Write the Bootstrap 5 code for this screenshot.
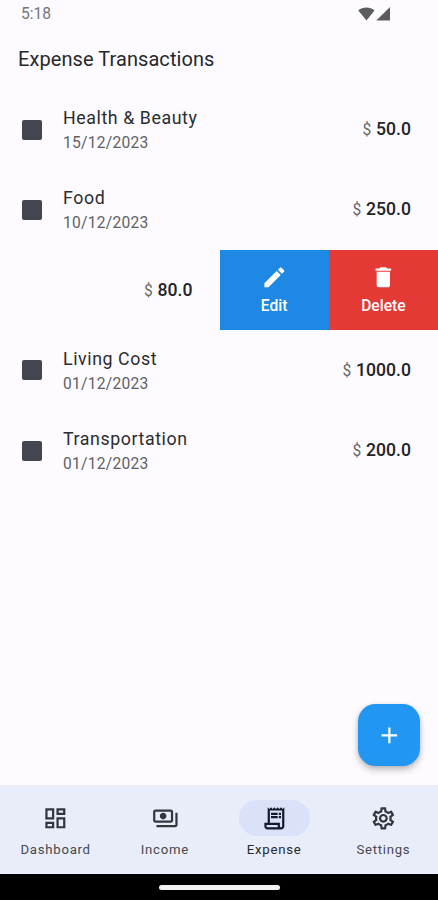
<!DOCTYPE html>
<html lang="en">
<head>
<meta charset="utf-8">
<meta name="viewport" content="width=device-width, initial-scale=1">
<title>Expense Transactions</title>
<link href="https://cdn.jsdelivr.net/npm/bootstrap@5.3.0/dist/css/bootstrap.min.css" rel="stylesheet">
<style>
  body { font-family: Roboto, sans-serif; background: #fdfbff; color: #2b2c30; height: 900px; overflow: hidden; line-height: 1.2; }
  .status { height: 29px; padding: 0 47px 0 21px; color: #737376; font-size: 15.6px; }
  .title-bar { height: 61px; padding: 0 18px 2px; }
  .title-bar h1 { font-size: 20px; font-weight: 400; letter-spacing: .07px; color: #27282b; }
  .entries { margin-top: -.4px !important; }
  .entry { height: 80.25px; }
  .entry-body { padding: 0 27px 0 22px; }
  .swatch { width: 20px; height: 20px; border-radius: 2px; background: #42474f; }
  .entry-text { padding-left: 21px; }
  .entry-name { font-size: 17.8px; letter-spacing: .58px; line-height: 25px; }
  .entry-date { font-size: 15.6px; letter-spacing: .26px; line-height: 22px; color: #606165; margin-top: 2px; }
  .amount { font-size: 17.6px; font-weight: 500; color: #222326; white-space: pre; }
  .amount small { font-size: 15.6px; font-weight: 400; color: #66676b; letter-spacing: .5px; }
  .slid { width: 219.5px; }
  .swipe { font-size: 15.6px; font-weight: 500; gap: 6px; padding-bottom: 1px; }
  .swipe-edit { background: #1e88e5; }
  .swipe-delete { background: #e53935; }
  .icon { width: 26.7px; height: 26.7px; fill: currentColor; display: block; }
  .fab-row { padding: 0 18px 19px 0; }
  .fab { width: 62px; height: 62px; border-radius: 17.5px; background: #2196f3; box-shadow: 0 4px 7px rgba(0,0,0,.22), 0 1px 4px rgba(0,0,0,.12); }
  .tabs { height: 89px; background: #e9edf9; padding: 15px 0 0 1px; }
  .tab-label { font-size: 13.2px; letter-spacing: .72px; line-height: 16px; margin-top: 6px; color: #46494f; }
  .pill { width: 71px; height: 36px; border-radius: 18px; color: #33373d; }
  .current .pill { background: #dae2f9; color: #141b2c; }
  .current .tab-label { color: #26282d; }
  .system { height: 26px; }
  .handle { width: 121px; height: 5px; border-radius: 2.5px; background: #f2f2f2; }
</style>
</head>
<body class="d-flex flex-column">
  <div class="status d-flex align-items-center justify-content-between flex-shrink-0">
    <span>5:18</span>
    <svg width="33" height="15" viewBox="0 0 33 15" fill="#5c5c5e"><path d="M.3 3.4C4.9-.3 12 -.3 16.500 3.400L8.500 13.500Z"/><path d="M32 0V13.500H18.300Z"/></svg>
  </div>
  <header class="title-bar d-flex align-items-center flex-shrink-0">
    <h1 class="m-0">Expense Transactions</h1>
  </header>

  <main class="flex-grow-1 d-flex flex-column">
    <ul class="entries list-unstyled m-0">
      <li class="entry entry-body d-flex align-items-center">
        <span class="swatch"></span>
        <div class="entry-text flex-grow-1"><div class="entry-name">Health &amp; Beauty</div><div class="entry-date">15/12/2023</div></div>
        <div class="amount"><small>$</small> 50.0</div>
      </li>
      <li class="entry entry-body d-flex align-items-center">
        <span class="swatch"></span>
        <div class="entry-text flex-grow-1"><div class="entry-name">Food</div><div class="entry-date">10/12/2023</div></div>
        <div class="amount"><small>$</small> 250.0</div>
      </li>
      <li class="entry d-flex">
        <div class="slid entry-body d-flex align-items-center justify-content-end"><div class="amount"><small>$</small> 80.0</div></div>
        <div class="swipe swipe-edit col text-white d-flex flex-column align-items-center justify-content-center" role="button">
          <svg class="icon" viewBox="0 0 24 24"><path d="M3 17.250V21h3.750L17.810 9.940l-3.750-3.750zM20.710 7.040c.39-.39.39-1.020 0-1.410l-2.340-2.340a1 1 0 0 0-1.410 0l-1.830 1.830 3.750 3.750z"/></svg>Edit
        </div>
        <div class="swipe swipe-delete col text-white d-flex flex-column align-items-center justify-content-center" role="button">
          <svg class="icon" viewBox="0 0 24 24"><path d="M6 19c0 1.100.9 2 2 2h8c1.100 0 2-.9 2-2V7H6zM19 4h-3.500l-1-1h-5l-1 1H5v2h14z"/></svg>Delete
        </div>
      </li>
      <li class="entry entry-body d-flex align-items-center">
        <span class="swatch"></span>
        <div class="entry-text flex-grow-1"><div class="entry-name">Living Cost</div><div class="entry-date">01/12/2023</div></div>
        <div class="amount"><small>$</small> 1000.0</div>
      </li>
      <li class="entry entry-body d-flex align-items-center">
        <span class="swatch"></span>
        <div class="entry-text flex-grow-1"><div class="entry-name">Transportation</div><div class="entry-date">01/12/2023</div></div>
        <div class="amount"><small>$</small> 200.0</div>
      </li>
    </ul>
    <div class="fab-row mt-auto d-flex justify-content-end">
      <button class="fab btn border-0 p-0 d-flex align-items-center justify-content-center text-white" aria-label="Add">
        <svg class="icon" viewBox="0 0 24 24"><path d="M19 13h-6v6h-2v-6H5v-2h6V5h2v6h6z"/></svg>
      </button>
    </div>
  </main>

  <nav class="tabs d-flex flex-shrink-0">
    <div class="col-3 d-flex flex-column align-items-center">
      <span class="pill d-flex align-items-center justify-content-center"><svg class="icon" viewBox="0 0 24 24"><path d="M19 5v2h-4V5h4M9 5v6H5V5h4m10 8v6h-4v-6h4M9 17v2H5v-2h4M21 3h-8v6h8V3zM11 3H3v10h8V3zm10 8h-8v10h8V11zm-10 4H3v6h8v-6z"/></svg></span>
      <span class="tab-label">Dashboard</span>
    </div>
    <div class="col-3 d-flex flex-column align-items-center">
      <span class="pill d-flex align-items-center justify-content-center"><svg class="icon" viewBox="0 0 24 24"><path d="M19 14V6c0-1.100-.9-2-2-2H3c-1.100 0-2 .9-2 2v8c0 1.100.9 2 2 2h14c1.100 0 2-.9 2-2zm-2 0H3V6h14v8zm-7-7c-1.660 0-3 1.340-3 3s1.340 3 3 3 3-1.340 3-3-1.340-3-3-3zm13 0v11c0 1.100-.9 2-2 2H4v-2h17V7h2z"/></svg></span>
      <span class="tab-label">Income</span>
    </div>
    <div class="col-3 current d-flex flex-column align-items-center">
      <span class="pill d-flex align-items-center justify-content-center"><svg class="icon" viewBox="0 0 24 24"><path d="M19.500 3.500 18 2l-1.500 1.500L15 2l-1.500 1.500L12 2l-1.500 1.500L9 2 7.500 3.500 6 2v14H3v3c0 1.660 1.340 3 3 3h12c1.660 0 3-1.340 3-3V2zM15 20H6c-.55 0-1-.45-1-1v-1h10zm4-1c0 .55-.45 1-1 1s-1-.45-1-1v-3H8V5h11zM9 7h6v2H9zM16 7h2v2h-2zM9 10h6v2H9zM16 10h2v2h-2z"/></svg></span>
      <span class="tab-label">Expense</span>
    </div>
    <div class="col-3 d-flex flex-column align-items-center">
      <span class="pill d-flex align-items-center justify-content-center"><svg class="icon" viewBox="0 0 24 24"><path d="M19.430 12.980c.04-.32.07-.64.07-.98 0-.34-.03-.66-.07-.98l2.110-1.650c.19-.15.24-.42.12-.64l-2-3.460c-.09-.16-.26-.25-.44-.25-.06 0-.12.01-.17.03l-2.490 1c-.52-.4-1.080-.73-1.690-.98l-.38-2.650C14.460 2.180 14.250 2 14 2h-4c-.25 0-.46.18-.49.42l-.38 2.650c-.61.25-1.170.59-1.690.98l-2.490-1c-.06-.02-.12-.03-.18-.03-.17 0-.34.09-.43.25l-2 3.460c-.13.22-.07.49.12.64l2.110 1.650c-.04.32-.07.65-.07.98 0 .33.03.66.07.98l-2.110 1.650c-.19.15-.24.42-.12.64l2 3.460c.09.16.26.25.44.25.06 0 .12-.01.17-.03l2.490-1c.52.4 1.080.73 1.690.98l.38 2.650c.03.24.24.42.49.42h4c.25 0 .46-.18.49-.42l.38-2.650c.61-.25 1.170-.59 1.690-.98l2.490 1c.06.02.12.03.18.03.17 0 .34-.09.43-.25l2-3.460c.12-.22.07-.49-.12-.64l-2.110-1.650zm-1.980-1.710c.04.31.05.52.05.73 0 .21-.02.43-.05.73l-.14 1.130.89.7 1.080.84-.7 1.210-1.270-.51-1.040-.42-.9.68c-.43.32-.84.56-1.250.73l-1.060.43-.16 1.130-.2 1.350h-1.400l-.19-1.350-.16-1.130-1.060-.43c-.43-.18-.83-.41-1.230-.71l-.91-.7-1.060.43-1.270.51-.7-1.210 1.080-.84.89-.7-.14-1.130c-.03-.31-.05-.54-.05-.74s.02-.43.05-.73l.14-1.130-.89-.7-1.080-.84.7-1.210 1.270.51 1.040.42.9-.68c.43-.32.84-.56 1.250-.73l1.060-.43.16-1.130.2-1.350h1.390l.19 1.350.16 1.130 1.060.43c.43.18.83.41 1.230.71l.91.7 1.060-.43 1.270-.51.7 1.210-1.070.85-.89.7.14 1.130zM12 8c-2.210 0-4 1.790-4 4s1.790 4 4 4 4-1.790 4-4-1.790-4-4-4zm0 6c-1.100 0-2-.9-2-2s.9-2 2-2 2 .9 2 2-.9 2-2 2z"/></svg></span>
      <span class="tab-label">Settings</span>
    </div>
  </nav>
  <div class="system bg-black d-flex align-items-center justify-content-center flex-shrink-0"><span class="handle"></span></div>
<script src="https://cdn.jsdelivr.net/npm/bootstrap@5.3.0/dist/js/bootstrap.bundle.min.js"></script>
</body>
</html>
